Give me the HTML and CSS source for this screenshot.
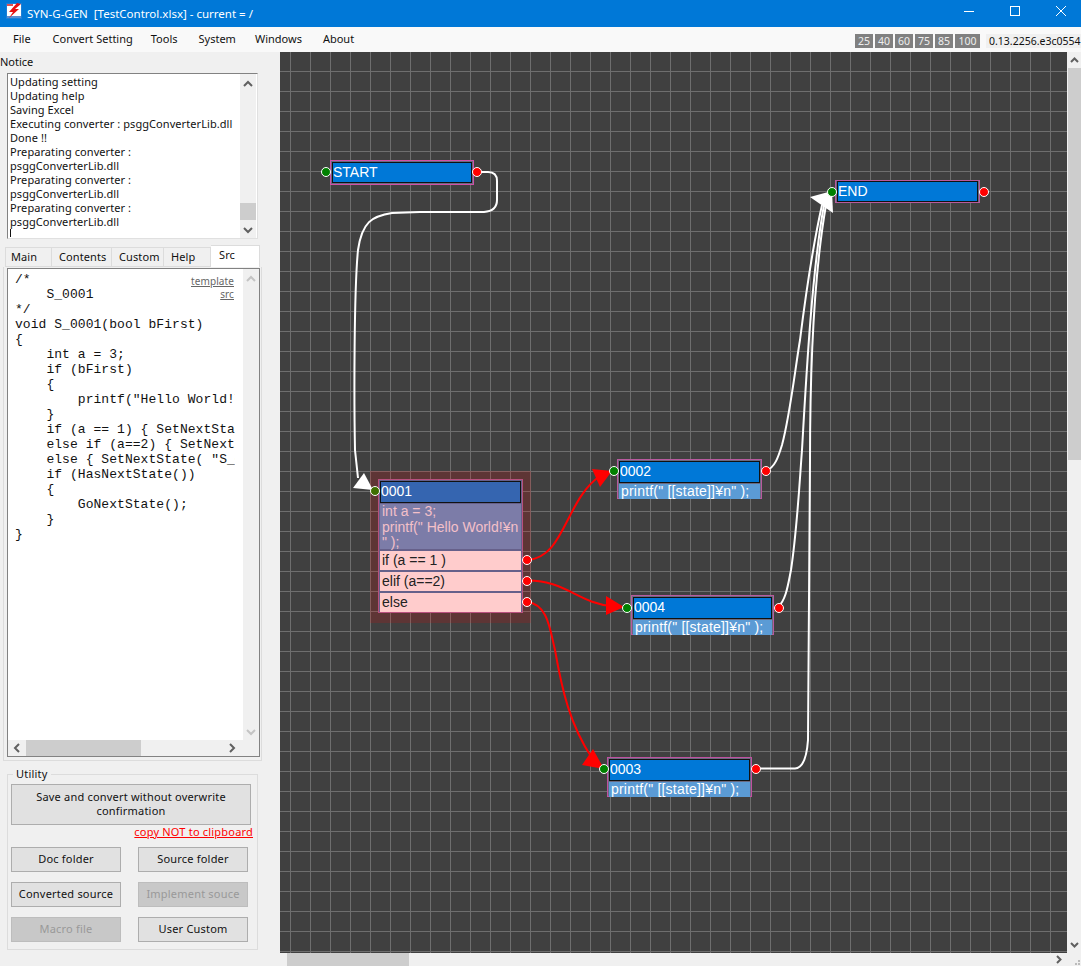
FILE: index.html
```
<!DOCTYPE html>
<html>
<head>
  <title>SYN-G-GEN</title>
  <link rel="stylesheet" href="styles.css">
</head>
<body>

<div class="titlebar">
  <svg class="app-icon" viewBox="0 0 16 16" width="16" height="16">
    <rect width="16" height="16" fill="#1d7fd6"/>
    <rect x="1" y="1" width="14" height="14" fill="#fff"/>
    <rect x="1" y="1" width="6" height="2" fill="#e05050"/>
    <rect x="1" y="13" width="14" height="2" fill="#5a8fd0"/>
    <polygon points="11,0 3,9 7,9 3,15 13,6 9,6 15,1" fill="#e81010"/>
  </svg>
  <div class="title-text">SYN-G-GEN&nbsp; [TestControl.xlsx] - current = /</div>
  <div class="win-btns">
    <svg viewBox="0 0 46 27" width="46" height="27"><path d="M18 11.500h10" stroke="#fff" fill="none"/></svg>
    <svg viewBox="0 0 46 27" width="46" height="27"><rect x="18.500" y="6.500" width="9" height="9" stroke="#fff" fill="none"/></svg>
    <svg viewBox="0 0 46 27" width="46" height="27"><path d="M18 6l10 10M28 6l-10 10" stroke="#fff" fill="none"/></svg>
  </div>
</div>

<div class="menubar">
  <span class="menu-item m-file">File</span>
  <span class="menu-item m-conv">Convert Setting</span>
  <span class="menu-item m-tools">Tools</span>
  <span class="menu-item m-system">System</span>
  <span class="menu-item m-windows">Windows</span>
  <span class="menu-item">About</span>
  <div class="zooms">
    <span class="zoom-btn">25</span>
    <span class="zoom-btn">40</span>
    <span class="zoom-btn">60</span>
    <span class="zoom-btn">75</span>
    <span class="zoom-btn">85</span>
    <span class="zoom-btn">100</span>
  </div>
  <div class="version">0.13.2256.e3c0554</div>
</div>

<div class="main">
  <div class="sidebar">
    <div class="notice-label">Notice</div>
    <div class="notice">
      <div class="notice-text">Updating setting
Updating help
Saving Excel
Executing converter : psggConverterLib.dll
Done !!
Preparating converter :
psggConverterLib.dll
Preparating converter :
psggConverterLib.dll
Preparating converter :
psggConverterLib.dll
<span class="caret"></span></div>
      <div class="vscroll notice-scroll">
        <svg class="chev" viewBox="0 0 16 16" width="16" height="16"><path d="M4 10l4-4 4 4" stroke="#606060" stroke-width="2" fill="none"/></svg>
        <div class="notice-track"><div class="notice-thumb"></div></div>
        <svg class="chev" viewBox="0 0 16 16" width="16" height="16"><path d="M4 6l4 4 4-4" stroke="#606060" stroke-width="2" fill="none"/></svg>
      </div>
    </div>

    <div class="tabs">
      <div class="tab tab-main">Main</div>
      <div class="tab tab-contents">Contents</div>
      <div class="tab tab-custom">Custom</div>
      <div class="tab tab-help">Help</div>
      <div class="tab tab-src">Src</div>
    </div>
    <div class="tab-panel">
      <div class="code-box">
        <div class="code-row">
          <div class="code-area">
            <div class="code-links"><a>template</a><a>src</a></div>
<pre class="code">/*
    S_0001
*/
void S_0001(bool bFirst)
{
    int a = 3;
    if (bFirst)
    {
        printf("Hello World!¥n");
    }
    if (a == 1) { SetNextState( "S_0002" ); }
    else if (a==2) { SetNextState( "S_0004" ); }
    else { SetNextState( "S_0003" ); }
    if (HasNextState())
    {
        GoNextState();
    }
}</pre>
          </div>
          <div class="vscroll code-vscroll">
            <svg class="chev" viewBox="0 0 16 16" width="16" height="16"><path d="M4 10l4-4 4 4" stroke="#c4c4c4" stroke-width="2" fill="none"/></svg>
            <svg class="chev" viewBox="0 0 16 16" width="16" height="16"><path d="M4 6l4 4 4-4" stroke="#c4c4c4" stroke-width="2" fill="none"/></svg>
          </div>
        </div>
        <div class="hscroll code-hscroll">
          <svg class="chev" viewBox="0 0 16 16" width="16" height="16"><path d="M10 4l-4 4 4 4" stroke="#606060" stroke-width="2" fill="none"/></svg>
          <div class="code-track"><div class="code-thumb"></div></div>
          <svg class="chev" viewBox="0 0 16 16" width="16" height="16"><path d="M6 4l4 4-4 4" stroke="#606060" stroke-width="2" fill="none"/></svg>
        </div>
      </div>
    </div>

    <div class="utility">
      <div class="utility-legend">Utility</div>
      <div class="btn btn-save">Save and convert without overwrite<br>confirmation</div>
      <div class="copy-link">copy NOT to clipboard</div>
      <div class="btn-grid">
        <div class="btn">Doc folder</div>
        <div class="btn">Source folder</div>
        <div class="btn">Converted source</div>
        <div class="btn btn-off">Implement souce</div>
        <div class="btn btn-off">Macro file</div>
        <div class="btn">User Custom</div>
      </div>
    </div>
  </div>

  <div class="canvas-wrap">
    <div class="canvas-row">
      <div class="canvas">
        <svg class="wires" viewBox="280 52 787 901" width="787" height="901">
          <g fill="none" stroke="#fff" stroke-width="2">
            <path d="M477 172H488Q497 172 497 181V200Q497 211 484 212H420L392 213C372 216 362 222 358 250C354 290 354 400 355 450L358 478"/>
            <path d="M766 471C775 467 778 458 782 445C790 415 795 370 800 340C805 300 812 250 822 205"/>
            <path d="M778 607C786 600 788 585 791 570C797 530 799 490 802 450C806 380 812 270 824 205"/>
            <path d="M756 768.500H795Q806 768 808 740L810 460C810 380 813 280 826 205"/>
          </g>
          <g fill="#fff">
            <polygon points="364,473 353,488 373,490"/>
            <polygon points="810,197 832,191 833,213"/>
          </g>
          <g fill="none" stroke="#f00" stroke-width="2">
            <path d="M527 560C565 558 565 500 600 476"/>
            <path d="M527 580.500C565 580 580 604 612 606"/>
            <path d="M527 602C548 604 550 630 555 650C562 690 570 725 592 758"/>
          </g>
          <g fill="#f00">
            <polygon points="592,469 600,487 612,471"/>
            <polygon points="606,596 606,615 624,607"/>
            <polygon points="582,765 593,749 604,769"/>
          </g>
        </svg>

        <div class="halo"></div>

        <div class="port port-in p-start-in"></div>
        <div class="port port-out p-start-out"></div>
        <div class="node n-start"><div class="node-title big">START</div></div>

        <div class="port port-in p-end-in"></div>
        <div class="port port-out p-end-out"></div>
        <div class="node n-end"><div class="node-title big">END</div></div>

        <div class="port port-in p-1-in"></div>
        <div class="node n-0001">
          <div class="node-title title-sel">0001</div>
          <div class="node-body body-sel">int a = 3;<br>printf(" Hello World!¥n<br>" );</div>
          <div class="branch">if (a == 1 )</div>
          <div class="branch">elif (a==2)</div>
          <div class="branch">else</div>
        </div>
        <div class="port port-out p-1-a"></div>
        <div class="port port-out p-1-b"></div>
        <div class="port port-out p-1-c"></div>

        <div class="port port-in p-2-in"></div>
        <div class="port port-out p-2-out"></div>
        <div class="node n-0002">
          <div class="node-title">0002</div>
          <div class="node-body">printf(" [[state]]¥n" );</div>
        </div>

        <div class="port port-in p-4-in"></div>
        <div class="port port-out p-4-out"></div>
        <div class="node n-0004">
          <div class="node-title">0004</div>
          <div class="node-body">printf(" [[state]]¥n" );</div>
        </div>

        <div class="port port-in p-3-in"></div>
        <div class="port port-out p-3-out"></div>
        <div class="node n-0003">
          <div class="node-title">0003</div>
          <div class="node-body">printf(" [[state]]¥n" );</div>
        </div>
      </div>
      <div class="vscroll canvas-vscroll">
        <svg class="chev" viewBox="0 0 13 16" width="13" height="16"><path d="M3 10l3.500-3.500L10 10" stroke="#606060" stroke-width="2" fill="none"/></svg>
        <div class="canvas-vthumb"></div>
        <svg class="chev chev-end" viewBox="0 0 13 16" width="13" height="16"><path d="M3 6l3.500 3.500L10 6" stroke="#606060" stroke-width="2" fill="none"/></svg>
      </div>
    </div>
    <div class="canvas-hscroll">
      <div class="canvas-hthumb"></div>
      <svg class="chev chev-end" viewBox="0 0 13 13" width="13" height="13"><path d="M4 3l3.500 3.500L4 10" stroke="#606060" stroke-width="2" fill="none"/></svg>
      <svg class="chev grip" viewBox="0 0 13 13" width="13" height="13"><path d="M10 7h2v2h-2zM7 10h2v2h-2zM10 10h2v2h-2z" fill="#bbb"/></svg>
    </div>
  </div>
</div>

</body>
</html>
```

FILE: styles.css
```
* {
  box-sizing: border-box;
}

html, body {
  margin: 0;
  padding: 0;
}

body {
  width: 1081px;
  height: 966px;
  overflow: hidden;
  background-color: #f0f0f0;
  font-family: "Noto Sans", sans-serif;
  font-size: 11px;
  color: #111;
}

/* title bar */
.titlebar {
  display: flex;
  align-items: center;
  height: 27px;
  background-color: #0078d7;
  color: #fff;
}

.app-icon {
  margin: 0 5px 5px 6px;
}

.title-text {
  flex: 1;
  font-size: 11.500px;
  white-space: pre;
}

.win-btns {
  display: flex;
  margin-right: -3px;
}

.win-btns svg {
  display: block;
}

/* menu */
.menubar {
  display: flex;
  align-items: center;
  height: 25px;
  padding-left: 13px;
  background-color: #f9f9f9;
  white-space: nowrap;
}

.menu-item {
  margin-right: 19px;
  margin-bottom: 2px;
}

.m-file { margin-right: 22px; }
.m-conv { margin-right: 18px; }
.m-tools { margin-right: 21px; }
.m-windows { margin-right: 21px; }

.zooms {
  display: flex;
  gap: 2px;
  margin-left: auto;
  margin-top: 3px;
}

.zoom-btn {
  height: 14px;
  min-width: 18px;
  padding: 0 2px;
  background-color: #808080;
  color: #eee;
  font-size: 10.500px;
  line-height: 14px;
  text-align: center;
}

.zooms .zoom-btn:last-child {
  min-width: 25px;
}

.version {
  width: 95px;
  height: 14px;
  margin: 3px 0 0 6px;
  padding-left: 3px;
  overflow: hidden;
  background-color: #f0f0f0;
  font-size: 10.500px;
  line-height: 14px;
}

/* layout */
.main {
  display: flex;
  height: 914px;
}

.sidebar {
  width: 280px;
  flex: none;
}

.notice-label {
  height: 21px;
  line-height: 20px;
}

.notice {
  display: flex;
  width: 251px;
  height: 166px;
  margin-left: 7px;
  border: 1px solid #828282;
  border-right-color: #e0e0e0;
  border-bottom-color: #e0e0e0;
  background-color: #fff;
}

.notice-text {
  flex: 1;
  padding: 1px 0 0 2px;
  line-height: 14px;
  letter-spacing: 0.07px;
  white-space: pre;
  overflow: hidden;
}

.caret {
  display: inline-block;
  width: 1px;
  height: 8px;
  vertical-align: top;
  background-color: #111;
}

.vscroll {
  display: flex;
  flex-direction: column;
  flex: none;
  background-color: #f0f0f0;
}

.chev {
  display: block;
  flex: none;
}

.notice-scroll {
  width: 16px;
  margin-right: 1px;
  padding-top: 2px;
}

.notice-track {
  flex: 1;
}

.notice-thumb {
  height: 17px;
  margin-top: 111px;
  background-color: #cdcdcd;
}

/* tabs */
.tabs {
  display: flex;
  align-items: flex-end;
  height: 28px;
  margin-left: 5px;
}

.tab {
  height: 20px;
  padding-left: 7px;
  border: 1px solid #dcdcdc;
  border-left: 0;
  line-height: 18px;
  letter-spacing: 0.1px;
  background-color: #f0f0f0;
}

.tab-main { width: 47px; padding-left: 5px; border-left: 1px solid #dcdcdc; }
.tab-contents { width: 60px; }
.tab-custom { width: 52px; }
.tab-help { width: 47px; }

.tab-src {
  width: 49px;
  height: 22px;
  padding-left: 8px;
  line-height: 18px;
  background-color: #fff;
  border-bottom: 0;
}

.tab-panel {
  width: 259px;
  height: 494px;
  margin-left: 3px;
  padding: 1px 1px 3px 3px;
  border: 1px solid #dcdcdc;
  border-top: 0;
}

.code-box {
  display: flex;
  flex-direction: column;
  height: 100%;
  border: 1px solid #828282;
  background-color: #fff;
}

.code-row {
  display: flex;
  flex: 1;
  min-height: 0;
}

.code-area {
  position: relative;
  width: 235px;
  padding-left: 7px;
  overflow: hidden;
}

.code {
  width: 220px;
  margin: 3px 0 0;
  overflow: hidden;
  font-family: "Liberation Mono", monospace;
  font-size: 13px;
  line-height: 15px;
  letter-spacing: 0.05px;
  color: #111;
}

.code-links {
  position: absolute;
  top: 6px;
  right: 9px;
  display: flex;
  flex-direction: column;
  align-items: flex-end;
  font-size: 10px;
  line-height: 13px;
  letter-spacing: 0.1px;
  color: #666;
  text-decoration: underline;
}

.code-vscroll {
  width: 16px;
  justify-content: space-between;
  padding-top: 2px;
}

.hscroll {
  display: flex;
  flex: none;
  height: 16px;
  background-color: #f0f0f0;
}

.code-track {
  flex: 1;
}

.code-thumb {
  width: 115px;
  height: 100%;
  margin-left: 1px;
  background-color: #cdcdcd;
}

.code-hscroll {
  padding: 0 19px 0 1px;
}

/* utility group */
.utility {
  position: relative;
  width: 251px;
  height: 176px;
  margin: 13px 0 0 7px;
  padding: 9px 3px 0;
  border: 1px solid #dcdcdc;
}

.utility-legend {
  position: absolute;
  top: -8px;
  left: 5px;
  padding: 0 3px;
  background-color: #f0f0f0;
  line-height: 14px;
  letter-spacing: 0.2px;
}

.btn {
  display: flex;
  align-items: center;
  justify-content: center;
  height: 25px;
  padding-bottom: 2px;
  border: 1px solid #adadad;
  background-color: #e1e1e1;
  letter-spacing: 0.2px;
  text-align: center;
  white-space: nowrap;
}

.btn-save {
  width: 240px;
  height: 41px;
  line-height: 14px;
}

.btn-off {
  background-color: #c8c8c8;
  border-color: #bdbdbd;
  color: #999;
}

.copy-link {
  width: 242px;
  height: 14px;
  color: #f00;
  font-size: 11px;
  line-height: 13px;
  letter-spacing: 0.2px;
  text-align: right;
  text-decoration: underline;
}

.btn-grid {
  display: grid;
  grid-template-columns: 110px 110px;
  column-gap: 17px;
  row-gap: 10px;
  margin-top: 8px;
}

/* canvas */
.canvas-wrap {
  flex: 1;
  min-width: 0;
  display: flex;
  flex-direction: column;
}

.canvas-row {
  display: flex;
  height: 901px;
}

.canvas {
  position: relative;
  width: 787px;
  height: 901px;
  overflow: hidden;
  background-color: #404040;
  background-image:
    linear-gradient(to right, #6e6e6e 1px, transparent 1px),
    linear-gradient(to bottom, #6e6e6e 1px, transparent 1px);
  background-size: 20px 20px;
  background-position: 10px -1px;
}

.wires {
  position: absolute;
  left: 0;
  top: 0;
  z-index: 2;
}

.canvas-vscroll {
  width: 13px;
  margin-left: 1px;
}

.canvas-vthumb {
  height: 392px;
  background-color: #cdcdcd;
}

.chev-end {
  margin-top: auto;
}

.canvas-hscroll {
  display: flex;
  height: 13px;
  padding-left: 7px;
  background-color: #f0f0f0;
}

.canvas-hthumb {
  width: 122px;
  height: 100%;
  background-color: #cdcdcd;
}

.canvas-hscroll .chev-end {
  margin-left: auto;
  margin-right: 2px;
}

/* nodes, positioned on the canvas (left = page x - 280, top = page y - 52) */
.halo {
  position: absolute;
  left: 90px;
  top: 419px;
  width: 161px;
  height: 152px;
  background-color: rgba(255, 0, 0, 0.16);
}

.node {
  position: absolute;
  z-index: 1;
  padding: 1px;
  border: 1px solid #b85a9e;
  background-color: #6a6a80;
  font-family: "Liberation Sans", sans-serif;
  font-size: 14px;
  color: #fff;
}

.node-title {
  height: 22px;
  border: 1px solid #111;
  background-color: #0078d7;
  line-height: 19px;
  white-space: nowrap;
}

.node-title.big {
  height: 21px;
  line-height: 18px;
}

.node-body {
  height: 15px;
  margin-top: 1px;
  padding-left: 2px;
  background-color: #5b9bd5;
  line-height: 15px;
  letter-spacing: 0.2px;
  white-space: nowrap;
}

.n-start { left: 50px; top: 108px; width: 144px; height: 25px; border-color: #d050a8; }
.n-end { left: 555px; top: 128px; width: 145px; height: 23px; padding: 0 1px; }
.n-end .node-title { height: 21px; }
.n-0001 { left: 98px; top: 427px; width: 145px; height: 134px; background-color: #66608a; border-color: #b8507e; }
.n-0002 { left: 337px; top: 407px; width: 145px; height: 40px; }
.n-0004 { left: 351px; top: 543px; width: 143px; height: 40px; }
.n-0003 { left: 327px; top: 705px; width: 145px; height: 40px; border-color: #c050a0; }

.title-sel {
  background-color: #3565b0;
}

.body-sel {
  height: 45px;
  background-color: #7c7ca8;
  color: #f4c0c8;
  line-height: 15.500px;
  letter-spacing: 0;
  white-space: normal;
}

.branch {
  height: 19px;
  margin-top: 2px;
  padding-left: 2px;
  background-color: #ffcccc;
  color: #222;
  line-height: 18px;
}

.port {
  position: absolute;
  z-index: 3;
  width: 10px;
  height: 10px;
  border: 1px solid #fff;
  border-radius: 50%;
}

.port-in { background-color: #008000; }
.port-out { background-color: #f00; }

.p-start-in { left: 40.500px; top: 115px; }
.p-start-out { left: 192px; top: 115px; }
.p-end-in { left: 546.500px; top: 134.500px; }
.p-end-out { left: 698.500px; top: 134.500px; }
.p-1-in { left: 89.500px; top: 434px; background-color: #3e6e00; }
.p-1-a { left: 241.500px; top: 503px; }
.p-1-b { left: 241.500px; top: 523.500px; }
.p-1-c { left: 241.500px; top: 545px; }
.p-2-in { left: 328.500px; top: 414px; }
.p-2-out { left: 480.500px; top: 414px; }
.p-4-in { left: 341.500px; top: 550.500px; }
.p-4-out { left: 493.500px; top: 550.500px; }
.p-3-in { left: 318.500px; top: 711.500px; }
.p-3-out { left: 470.500px; top: 711.500px; }
```
